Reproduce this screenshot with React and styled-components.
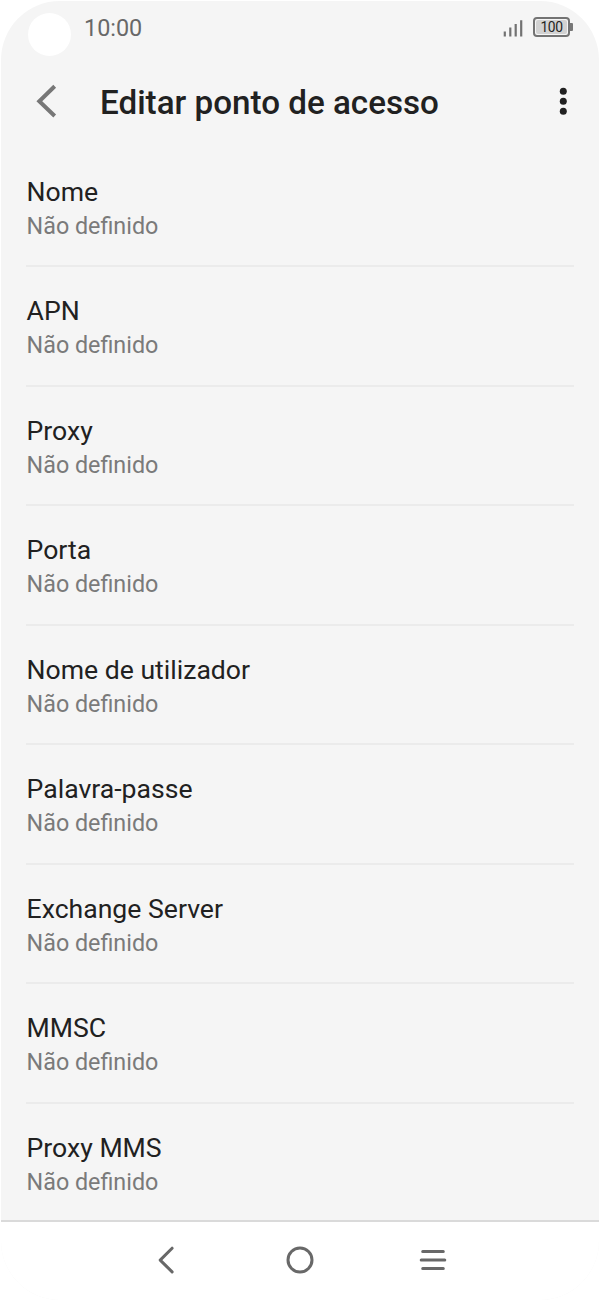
import React from 'react';
import styled, { createGlobalStyle } from 'styled-components';

const fields = [
  'Nome',
  'APN',
  'Proxy',
  'Porta',
  'Nome de utilizador',
  'Palavra-passe',
  'Exchange Server',
  'MMSC',
  'Proxy MMS',
];

const App = () => {
  return (
    <>
      <GlobalStyle />
      <Phone>
        <StatusBar>
          <Camera />
          <Time>10:00</Time>
          <Signal viewBox="0 0 20 18">
            <path d="M1.8 12.5v5M7.3 8.5v9M12.7 5v12.5M18.2 1.2v16.3" />
          </Signal>
          <Battery>
            <Charge>100</Charge>
          </Battery>
          <BatteryTip />
        </StatusBar>
        <Header>
          <BackIcon viewBox="0 0 21 34">
            <path d="M18.7 2.2L3.3 17.2l15.4 14.8" />
          </BackIcon>
          <Title>Editar ponto de acesso</Title>
          <MoreIcon viewBox="0 0 8 28">
            <circle cx="4.3" cy="4.2" r="3.5" />
            <circle cx="4.3" cy="14.2" r="3.5" />
            <circle cx="4.3" cy="24.2" r="3.5" />
          </MoreIcon>
        </Header>
        <List>
          {fields.map((name) => (
            <Row key={name}>
              <Name>{name}</Name>
              <Value>Não definido</Value>
            </Row>
          ))}
        </List>
        <NavBar>
          <NavIcon viewBox="0 0 30 30">
            <path d="M20.1 3.2L8.2 15.1l11.9 11.8" />
          </NavIcon>
          <NavIcon viewBox="0 0 30 30">
            <circle cx="15" cy="15" r="12" />
          </NavIcon>
          <NavIcon viewBox="0 0 30 30">
            <path d="M4.7 6.6h20.6M3.2 15.1h23.6M4.7 23.5h20.6" />
          </NavIcon>
        </NavBar>
      </Phone>
    </>
  );
};

export default App;

const GlobalStyle = createGlobalStyle`
  * {
    box-sizing: border-box;
  }

  body {
    margin: 0;
    background: #fff;
    font-family: Roboto, sans-serif;
  }
`;

const Phone = styled.div`
  display: flex;
  flex-direction: column;
  width: 598px;
  height: 1299px;
  margin: 1px 1px 0;
  border-radius: 59px;
  overflow: hidden;
  background: #f5f5f5;
`;

const StatusBar = styled.div`
  display: flex;
  flex: none;
  height: 55px;
  padding-left: 27px;
`;

const Camera = styled.div`
  flex: none;
  width: 43px;
  height: 43px;
  margin-top: 12px;
  border-radius: 50%;
  background: #fff;
`;

const Time = styled.div`
  margin: 13px auto 0 13px;
  font-size: 23.4px;
  line-height: 28px;
  color: #686868;
`;

const Signal = styled.svg`
  width: 20px;
  height: 18px;
  margin: 18px 10px 0 0;
  fill: none;
  stroke: #727272;
  stroke-width: 2.2;
  overflow: visible;
`;

const Battery = styled.div`
  width: 37px;
  height: 20px;
  margin-top: 16px;
  padding: 1px;
  border: 2px solid #737373;
  border-radius: 4px;
`;

const Charge = styled.div`
  height: 14px;
  border-radius: 2px;
  background: #d2d2d2;
  font-size: 13.8px;
  letter-spacing: -0.4px;
  line-height: 14px;
  text-align: center;
  color: #222;
`;

const BatteryTip = styled.div`
  width: 3px;
  height: 8px;
  margin: 22px 26px 0 0;
  border-radius: 0 1px 1px 0;
  background: #777;
`;

const Header = styled.header`
  display: flex;
  flex: none;
  align-items: center;
  height: 90px;
  padding: 0 32px 0 35px;
`;

const BackIcon = styled.svg`
  width: 21px;
  height: 34px;
  fill: none;
  stroke: #777;
  stroke-width: 4;
`;

const Title = styled.h1`
  margin: 4px auto 0 43px;
  font-size: 33.2px;
  font-weight: 500;
  line-height: 40px;
  color: #212121;
`;

const MoreIcon = styled.svg`
  width: 8px;
  height: 28px;
  fill: #212121;
`;

const List = styled.div`
  flex: 1;
  min-height: 0;
  padding: 2px 25px 0;
`;

const Row = styled.div`
  height: 119.45px;
  padding: 28px 0 0 0.6px;
  border-bottom: 2px solid #ebebeb;

  &:last-child {
    height: 73px;
    border-bottom: 0;
  }
`;

const Name = styled.div`
  font-size: 26.6px;
  line-height: 32px;
  color: #212121;
`;

const Value = styled.div`
  margin-top: 3px;
  font-size: 23.3px;
  line-height: 30px;
  color: #7a7a7a;
`;

const NavBar = styled.nav`
  display: flex;
  flex: none;
  justify-content: center;
  gap: 103px;
  height: 80px;
  padding-top: 23px;
  border-top: 2px solid #dadada;
  background: #fff;
`;

const NavIcon = styled.svg`
  width: 30px;
  height: 30px;
  fill: none;
  stroke: #686868;
  stroke-width: 3;
  stroke-linecap: round;
  stroke-linejoin: round;
`;
